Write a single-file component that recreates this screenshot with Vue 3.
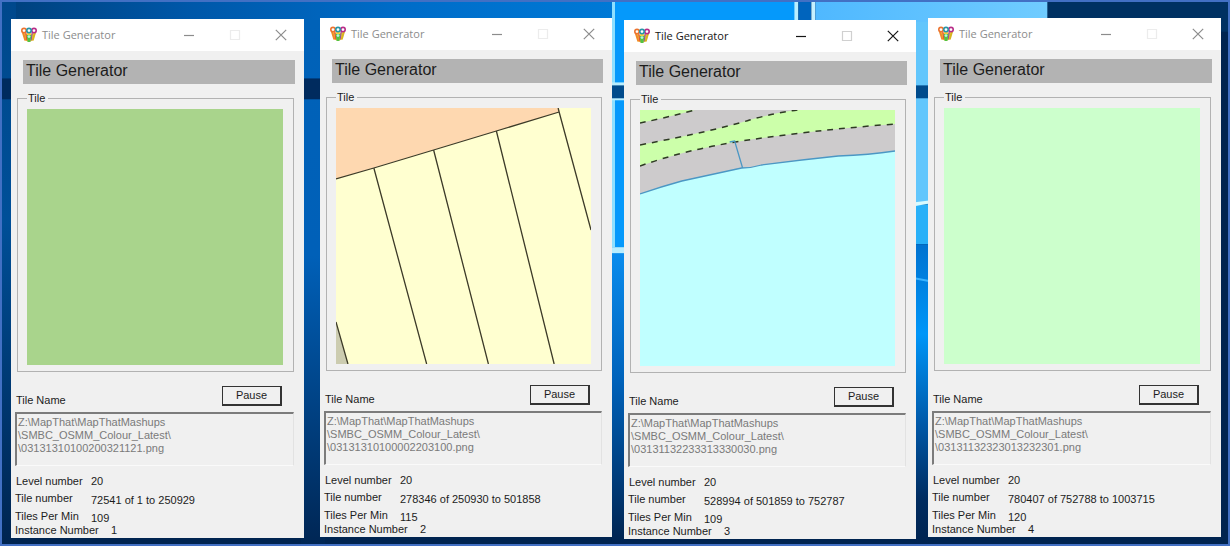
<script setup>
const windows = [
  { id: 1, map: 'grass', file: '\\03131310100200321121.png', tile: '72541 of 1 to 250929', rate: '109' },
  { id: 2, map: 'plots', file: '\\03131310100002203100.png', tile: '278346 of 250930 to 501858', rate: '115' },
  { id: 3, map: 'shore', file: '\\03131132233313330030.png', tile: '528994 of 501859 to 752787', rate: '109', active: true },
  { id: 4, map: 'field', file: '\\03131132323013232301.png', tile: '780407 of 752788 to 1003715', rate: '120' },
]
const folder = 'Z:\\MapThat\\MapThatMashups\n\\SMBC_OSMM_Colour_Latest\\\n'
</script>

<template>
  <main class="desktop">
    <svg class="wallpaper" viewBox="0 0 1230 546" preserveAspectRatio="none" aria-hidden="true">
      <defs>
        <linearGradient id="top" x1="0" x2="1" y1="0" y2="0">
          <stop offset="0" stop-color="#00407c" />
          <stop offset="0.3" stop-color="#0057a8" />
          <stop offset="0.65" stop-color="#006cc8" />
          <stop offset="1" stop-color="#0079d6" />
        </linearGradient>
        <linearGradient id="left" x1="0" x2="0" y1="0" y2="1">
          <stop offset="0" stop-color="#00488c" />
          <stop offset="0.4" stop-color="#004f98" />
          <stop offset="1" stop-color="#002450" />
        </linearGradient>
        <linearGradient id="gap" x1="0" x2="0" y1="0" y2="1">
          <stop offset="0" stop-color="#0062b8" />
          <stop offset="0.45" stop-color="#0060b8" />
          <stop offset="1" stop-color="#002654" />
        </linearGradient>
        <linearGradient id="glow" x1="0" x2="0" y1="0" y2="1">
          <stop offset="0" stop-color="#0a8ef0" />
          <stop offset="0.45" stop-color="#0062ba" />
          <stop offset="1" stop-color="#002350" />
        </linearGradient>
        <linearGradient id="beam" x1="0" x2="0" y1="0" y2="1">
          <stop offset="0" stop-color="#0072d0" />
          <stop offset="0.3" stop-color="#0096f8" />
          <stop offset="0.6" stop-color="#0058a8" />
          <stop offset="0.85" stop-color="#002c60" />
          <stop offset="1" stop-color="#002350" />
        </linearGradient>
        <linearGradient id="pane" x1="0" x2="1" y1="0" y2="0">
          <stop offset="0" stop-color="#4fb8ff" />
          <stop offset="1" stop-color="#70ccff" />
        </linearGradient>
      </defs>
      <rect width="1230" height="546" fill="#002450" />
      <rect width="613" height="30" fill="url(#top)" />
      <rect width="14" height="546" fill="url(#left)" />
      <rect x="300" y="18" width="24" height="528" fill="url(#gap)" />
      <rect y="77" width="330" height="21" fill="#002b5e" />
      <rect x="612" width="184" height="247" fill="#0599fb" />
      <rect x="612" width="3" height="247" fill="#8fe0ff" />
      <rect x="795" width="4" height="30" fill="#b9eeff" />
      <rect x="799" width="13" height="30" fill="#0064bd" />
      <rect x="812" width="4" height="30" fill="#c6f0ff" />
      <rect x="816" width="233" height="30" fill="url(#pane)" />
      <rect x="914" y="20" width="16" height="184" fill="#62c6fc" />
      <rect x="612" y="81" width="14" height="18" fill="#b9eeff" />
      <rect x="612" y="84" width="318" height="13" fill="#004b8c" />
      <rect x="612" y="247" width="14" height="299" fill="url(#glow)" />
      <rect x="914" y="204" width="16" height="40" fill="#28b0f8" />
      <path d="M914 202L930 200V203L914 206Z" fill="#d8fbff" />
      <rect x="914" y="244" width="16" height="302" fill="url(#beam)" />
      <path d="M914 278L930 281" stroke="#3bb4ff" stroke-width="2" />
      <rect x="612" y="247" width="14" height="6" fill="#b9eeff" />
      <rect x="1049" width="181" height="30" fill="#003162" />
    </svg>

    <section v-for="w in windows" :key="w.id" class="window" :class="{ active: w.active }">
      <header class="titlebar">
        <svg class="logo" viewBox="0 0 16 16" aria-hidden="true">
          <path d="M1.2 4.5L4.2 13.5L8 15L11.8 13.5L14.8 4.5L11 7L8 5L5 7Z" fill="#f4cf3a" />
          <path d="M1.6 4.5L4.4 13.5" stroke="#f08a28" stroke-width="2" />
          <path d="M4.6 5L6 13.5" stroke="#e8483c" stroke-width="1.3" />
          <path d="M14.4 4.5L11.6 13.5" stroke="#d8b31e" stroke-width="2" />
          <path d="M11.4 5L10 13.5" stroke="#9a4a9e" stroke-width="1.3" />
          <path d="M5.6 8H10.4L9.4 15H6.6Z" fill="#52c246" />
          <circle cx="3" cy="3.6" r="2.2" fill="#fff" stroke="#ec7430" stroke-width="1.6" />
          <circle cx="13" cy="3.6" r="2.2" fill="#fff" stroke="#b82c88" stroke-width="1.6" />
          <circle cx="8" cy="3.6" r="2.2" fill="#fff" stroke="#2795a8" stroke-width="1.6" />
          <circle cx="8" cy="9.6" r="1.4" fill="#b6f3e4" />
        </svg>
        <span class="caption">Tile Generator</span>
        <button class="control" type="button" aria-label="Minimize">
          <svg viewBox="0 0 12 12"><path d="M1 6.5H11" /></svg>
        </button>
        <button class="control maximize" type="button" aria-label="Maximize" disabled>
          <svg viewBox="0 0 12 12"><path d="M1.5 1.5H10.5V10.5H1.5Z" /></svg>
        </button>
        <button class="control" type="button" aria-label="Close">
          <svg viewBox="0 0 12 12"><path d="M0.8 0.8L11.2 11.2M11.2 0.8L0.8 11.2" /></svg>
        </button>
      </header>

      <h1 class="heading">Tile Generator</h1>

      <fieldset class="group">
        <legend>Tile</legend>
        <svg class="map" viewBox="0 0 256 256" preserveAspectRatio="none" role="img" aria-label="Current tile">
          <rect v-if="w.map === 'grass'" width="256" height="256" fill="#a9d48c" />
          <rect v-else-if="w.map === 'field'" width="256" height="256" fill="#ccffcc" />
          <g v-else-if="w.map === 'plots'">
            <rect width="256" height="256" fill="#ffffd0" />
            <path d="M0 0H224V4L0 71Z" fill="#fed8b0" />
            <path d="M0 214L12 256H0Z" fill="#ccccb0" />
            <g fill="none" stroke="#3c3a28" stroke-width="1.3">
              <path d="M0 71L38 60L98 42L161 23L224 4M223 0L224 4L256 122" />
              <path d="M38 60L91 256M98 42L153 256M161 23L219 256M0 214L12 256" />
            </g>
          </g>
          <g v-else>
            <rect width="256" height="256" fill="#c0ffff" />
            <path d="M0 0H256V41Q230 45 199 46Q160 50 122 55Q112 58 102 58Q70 65 42 71Q20 77 0 84Z" fill="#cdcbcc" />
            <path d="M0 0H55Q25 8 0 13Z" fill="#ccffaa" />
            <path d="M0 35Q78 20 110 10Q135 3 156 0H256V14Q175 20 102 31Q45 40 0 56Z" fill="#ccffaa" />
            <g fill="none" stroke="#2e3a24" stroke-width="1.5" stroke-dasharray="6 6">
              <path d="M0 13Q25 8 55 0" />
              <path d="M0 35Q78 20 110 10Q135 3 158 0" />
              <path d="M0 56Q45 40 102 31Q175 20 256 14" />
            </g>
            <path d="M0 84Q20 77 42 71Q70 65 102 58Q112 58 122 55Q160 50 199 46Q230 45 256 41M90 32L95 31L103 58" fill="none" stroke="#4b97c4" stroke-width="1.3" />
          </g>
        </svg>
      </fieldset>

      <div class="namebar">
        <label :for="'name-' + w.id">Tile Name</label>
        <button class="pause" type="button">Pause</button>
      </div>
      <textarea :id="'name-' + w.id" class="path" disabled :value="folder + w.file"></textarea>

      <dl class="stats">
        <div class="level"><dt>Level number</dt><dd>20</dd></div>
        <div class="tile"><dt>Tile number</dt><dd>{{ w.tile }}</dd></div>
        <div class="rate"><dt>Tiles Per Min</dt><dd>{{ w.rate }}</dd></div>
        <div class="instance"><dt>Instance Number</dt><dd>{{ w.id }}</dd></div>
      </dl>
    </section>
  </main>
</template>

<style>
body {
  margin: 0;
}
</style>

<style scoped>
.desktop {
  position: relative;
  display: grid;
  grid-template-columns: 297fr 292fr 292fr 293fr;
  column-gap: 12px;
  align-items: start;
  box-sizing: border-box;
  min-height: 100vh;
  padding: 16px 7px 5px 9px;
  border: 2px solid #4270c4;
  font: 11px/13px "Liberation Sans", Arial, sans-serif;
  color: #1c1c1c;
}
.wallpaper {
  position: absolute;
  inset: 0;
  width: 100%;
  height: 100%;
}
.window {
  position: relative;
  background: #f0f0f0;
}
.window:nth-of-type(1) {
  margin: 1px 4px 0 0;
}
.window:nth-of-type(3) {
  margin-top: 2px;
}
.titlebar {
  display: flex;
  align-items: center;
  height: 32px;
  padding-left: 10px;
  background: #fff;
  color: #8c8c8c;
}
.logo {
  width: 16px;
  height: 16px;
}
.caption {
  flex: 1;
  padding-left: 5px;
  font: 11px/16px "Open Sans", sans-serif;
}
.active .titlebar {
  color: #151515;
}
.control {
  display: grid;
  place-items: center;
  width: 46px;
  height: 32px;
  padding: 0;
  border: 0;
  background: none;
  color: inherit;
}
.control svg {
  width: 12px;
  height: 12px;
  fill: none;
  stroke: currentColor;
  stroke-width: 1.2;
}
.control.maximize {
  color: #ececec;
}
.active .control.maximize {
  color: #d0d0d0;
}
.heading {
  height: 24px;
  margin: 9px 9px 0 12px;
  padding-left: 3px;
  background: #b3b3b3;
  font-size: 16px;
  font-weight: 400;
  line-height: 22px;
}
.group {
  min-width: 0;
  margin: 8px 10px 0 6px;
  padding: 4px 10px 6px 9px;
  border: 1px solid #b2b2b2;
}
.group legend {
  padding: 0 3px 0 1px;
}
.map {
  display: block;
  width: 100%;
  height: 256px;
}
.namebar {
  display: flex;
  justify-content: space-between;
  align-items: flex-start;
  margin: 14px 22px 0 5px;
}
.namebar label {
  padding-top: 8px;
}
.pause {
  width: 60px;
  height: 20px;
  padding: 0;
  border: 1px solid #333;
  border-right-width: 2px;
  border-bottom-width: 2px;
  background: #f0f0f0;
  color: inherit;
  font: inherit;
}
.path {
  display: block;
  box-sizing: border-box;
  width: calc(100% - 14px);
  height: 54px;
  margin: 5px 10px 0 4px;
  padding: 2px 1px;
  border: 2px solid #7c7c7c;
  border-right: 1px solid #e2e2e2;
  border-bottom: 1px solid #fafafa;
  background: #f0f0f0;
  color: #7a7a7a;
  font: inherit;
  resize: none;
  overflow: hidden;
  white-space: pre;
}
.stats {
  margin: 0;
  padding: 9px 0 1px 4px;
}
.stats div {
  display: grid;
  grid-template-columns: 76px 1fr;
  height: 18px;
}
.stats dd {
  margin: 0;
}
.stats .level {
  grid-template-columns: 75px 1fr;
  height: 17px;
  padding-left: 1px;
}
.tile dd,
.rate dd {
  padding-top: 2px;
}
.stats .rate {
  height: 14px;
}
.stats .instance {
  grid-template-columns: 96px 1fr;
  height: 13px;
}
</style>
